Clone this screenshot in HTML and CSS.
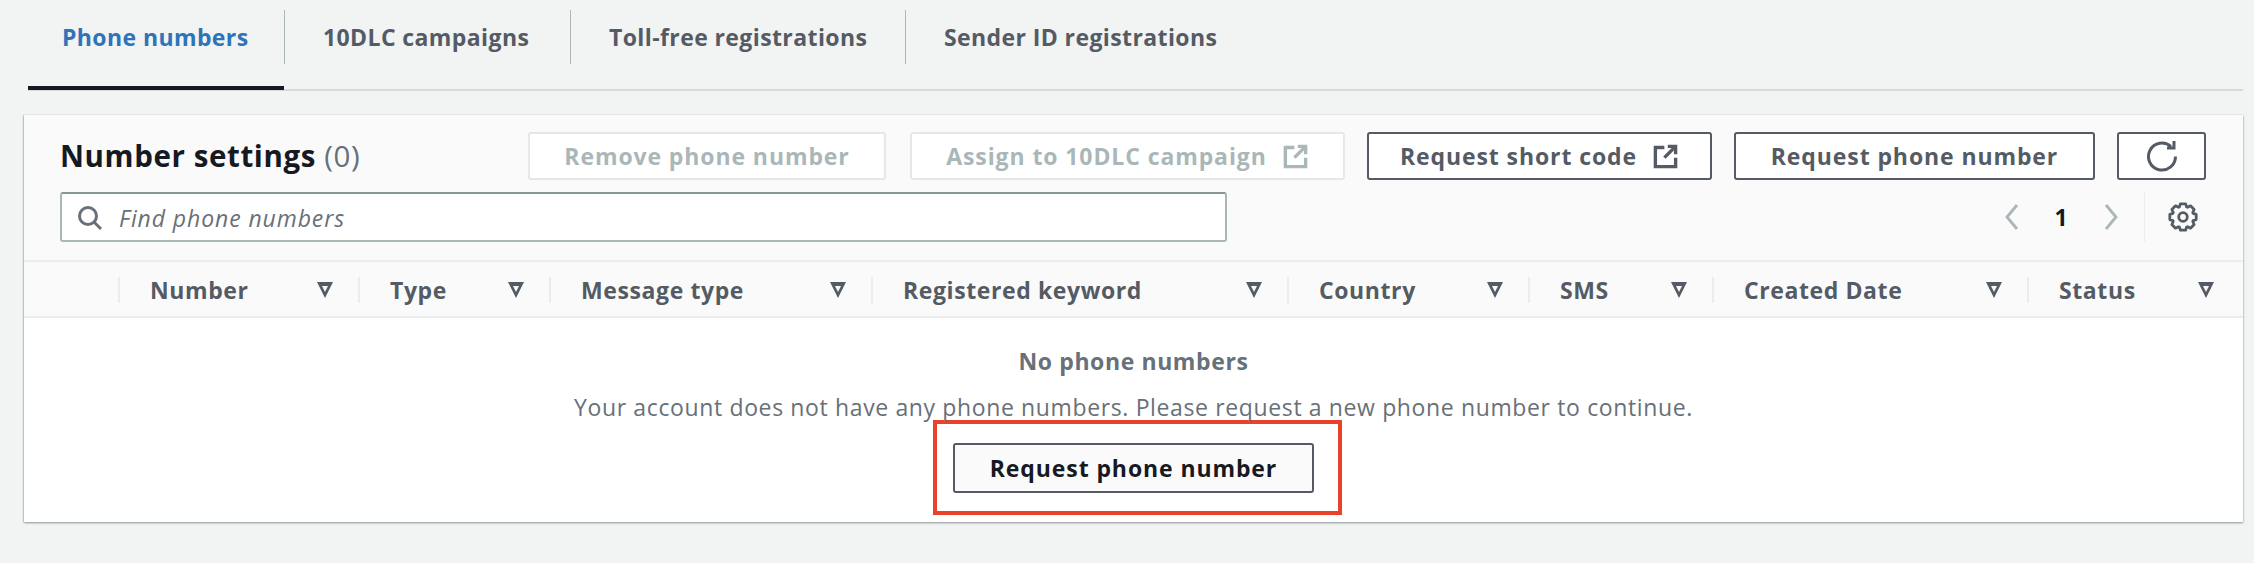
FILE: index.html
```html
<!DOCTYPE html>
<html lang="en">
<head>
<meta charset="utf-8">
<title>Phone numbers</title>
<link rel="stylesheet" href="styles.css">
</head>
<body>
<nav class="tabs">
  <a class="tab tab-active">Phone numbers</a>
  <a class="tab tab-two">10DLC campaigns</a>
  <a class="tab tab-three">Toll-free registrations</a>
  <a class="tab tab-four">Sender ID registrations</a>
</nav>
<section class="panel">
  <header class="panel-head">
    <div class="head-top">
      <h2 class="title">Number settings <span class="count">(0)</span></h2>
      <div class="actions">
        <button class="btn btn-disabled btn-remove">Remove phone number</button>
        <button class="btn btn-disabled btn-assign">Assign to 10DLC campaign
          <svg class="ext" viewBox="0 0 24 24"><path d="M11 4H3v17h18v-8M14 3h7v7M21 3 11 13"/></svg>
        </button>
        <button class="btn btn-short">Request short code
          <svg class="ext" viewBox="0 0 24 24"><path d="M11 4H3v17h18v-8M14 3h7v7M21 3 11 13"/></svg>
        </button>
        <button class="btn btn-phone">Request phone number</button>
        <button class="btn btn-refresh" aria-label="Refresh">
          <svg class="refresh" viewBox="0 0 32 32"><path d="M29.500 16.500A13.500 13.500 0 1 1 25 6.500M28 1v7h-7"/></svg>
        </button>
      </div>
    </div>
    <div class="head-bottom">
      <label class="search">
        <svg class="search-icon" viewBox="0 0 26 26"><circle cx="11" cy="11" r="8.500"/><path d="m17 17 7 7"/></svg>
        <span class="placeholder">Find phone numbers</span>
      </label>
      <div class="pager">
        <svg class="chev" viewBox="0 0 16 28"><path d="M13 2 3 14l10 12"/></svg>
        <span class="page">1</span>
        <svg class="chev" viewBox="0 0 16 28"><path d="m3 2 10 12L3 26"/></svg>
        <span class="pager-sep"></span>
        <svg class="gear" viewBox="0 0 28 28"><circle cx="14" cy="14" r="4"/><polygon points="26.300,16.400 23.400,17.400 23.100,18.200 24.400,21 21,24.400 18.200,23.100 17.400,23.400 16.400,26.300 11.600,26.300 10.600,23.400 9.800,23.100 7,24.400 3.600,21 4.900,18.200 4.600,17.400 1.700,16.400 1.700,11.600 4.600,10.600 4.900,9.800 3.600,7 7,3.600 9.800,4.900 10.600,4.600 11.600,1.700 16.400,1.700 17.400,4.600 18.200,4.900 21,3.600 24.400,7 23.100,9.800 23.400,10.600 26.300,11.600"/></svg>
      </div>
    </div>
  </header>
  <div class="thead">
    <div class="th th-select"></div>
    <div class="th"><span>Number</span><i class="sort"></i></div>
    <div class="th"><span>Type</span><i class="sort"></i></div>
    <div class="th"><span>Message type</span><i class="sort"></i></div>
    <div class="th"><span>Registered keyword</span><i class="sort"></i></div>
    <div class="th"><span>Country</span><i class="sort"></i></div>
    <div class="th"><span>SMS</span><i class="sort"></i></div>
    <div class="th"><span>Created Date</span><i class="sort"></i></div>
    <div class="th"><span>Status</span><i class="sort"></i></div>
  </div>
  <div class="empty">
    <p class="empty-title">No phone numbers</p>
    <p class="empty-text">Your account does not have any phone numbers. Please request a new phone number to continue.</p>
    <div class="highlight">
      <button class="btn btn-empty">Request phone number</button>
    </div>
  </div>
</section>
</body>
</html>
```
FILE: styles.css
```css
* { box-sizing: border-box; }
html, body { margin: 0; }
html { background: #fff; }
body {
  background: #f2f3f3;
  font-family: "Open Sans", "Noto Sans", sans-serif;
  letter-spacing: 0.6px;
  color: #545b64;
  overflow: hidden;
  height: 563px;
  padding: 0 11px 0 24px;
}
.tabs {
  display: flex;
  height: 91px;
  margin: 0 0 24px 4px;
  padding-top: 10px;
  border-bottom: 2px solid #d5dbdb;
  align-items: flex-start;
}
.tab {
  height: 54px;
  display: flex;
  align-items: center;
  font-size: 23px;
  font-weight: 700;
  letter-spacing: 0.4px;
  white-space: nowrap;
  padding-left: 34px;
  border-right: 1px solid #aab7b8;
}
.tab-active { width: 257px; color: #2f73b8; position: relative; }
.tab-active::after {
  content: "";
  position: absolute;
  left: 0;
  right: 0;
  top: 76px;
  height: 4px;
  background: #16191f;
}
.tab-two { width: 286px; padding-left: 38px; }
.tab-three { width: 335px; padding-left: 38px; }
.tab-four { border-right: 0; padding-left: 38px; }
.panel {
  background: #fff;
  height: 407px;
  box-shadow: 0 1px 2px #8d969f, 1px 0 1px #e4e7e7, -1px 0 1px #d5dbdb;
  overflow: hidden;
}
.panel-head {
  background: #fafafa;
  height: 147px;
  padding: 17px 37px 0 36px;
  border-bottom: 2px solid #eaeded;
}
.head-top { display: flex; align-items: center; height: 48px; }
.title {
  margin: 0;
  font-size: 29.500px;
  font-weight: 700;
  color: #16191f;
  white-space: nowrap;
  line-height: 48px;
}
.count { font-weight: 400; color: #687078; }
.actions { display: flex; margin-left: auto; gap: 22px; }
.btn {
  height: 48px;
  padding: 0;
  font: 700 23px "Open Sans", "Noto Sans", sans-serif;
  letter-spacing: 0.9px;
  color: #545b64;
  background: #fff;
  border: 2px solid #545b64;
  border-radius: 3px;
  display: flex;
  align-items: center;
  justify-content: center;
  white-space: nowrap;
}
.btn-disabled {
  color: #aab7b8;
  border-color: #e4e8e8;
}
.btn-remove { width: 358px; margin-right: 2px; }
.btn-assign { width: 435px; }
.btn-short { width: 345px; }
.btn-phone { width: 361px; }
.btn-refresh { width: 89px; }
.ext {
  width: 27px;
  height: 27px;
  margin-left: 15px;
  fill: none;
  stroke: currentColor;
  stroke-width: 3;
}
.refresh {
  width: 32px;
  height: 32px;
  fill: none;
  stroke: #545b64;
  stroke-width: 3;
}
.head-bottom {
  display: flex;
  align-items: flex-start;
  justify-content: space-between;
  margin-top: 12px;
}
.search {
  width: 1167px;
  height: 50px;
  background: #fff;
  border: 2px solid #aab7b8;
  border-top-color: #879596;
  border-radius: 3px;
  display: flex;
  align-items: center;
  padding: 1px 0 0 15px;
}
.search-icon {
  width: 26px;
  height: 26px;
  fill: none;
  stroke: #687078;
  stroke-width: 3;
  flex: none;
}
.placeholder {
  margin-left: 16px;
  font-size: 23px;
  font-style: italic;
  letter-spacing: 0.9px;
  color: #687078;
}
.pager { display: flex; align-items: center; height: 50px; margin-right: 8px; }
.chev {
  width: 16px;
  height: 28px;
  fill: none;
  stroke: #aab7b8;
  stroke-width: 2.800;
}
.page {
  width: 83px;
  text-align: center;
  font-size: 23px;
  font-weight: 700;
  color: #16191f;
}
.pager-sep {
  width: 1px;
  height: 50px;
  background: #eaeded;
  margin-left: 25px;
  margin-right: 23px;
}
.gear {
  width: 30px;
  height: 30px;
  fill: none;
  stroke: #545b64;
  stroke-width: 2.600;
  stroke-linejoin: round;
}
.thead {
  display: grid;
  grid-template-columns: 96px 240px 191px 322px 416px 241px 184px 315px 214px;
  height: 56px;
  padding-top: 2px;
  background: #fafafa;
  border-bottom: 2px solid #eaeded;
  align-items: center;
}
.th {
  height: 26px;
  display: flex;
  align-items: center;
  justify-content: space-between;
  padding: 0 25px 0 30px;
  font-size: 23px;
  font-weight: 700;
  border-right: 2px solid #eaeded;
  white-space: nowrap;
}
.th:last-child { border-right: 0; padding-right: 29px; }
.sort {
  width: 16px;
  height: 16px;
  clip-path: polygon(0 0, 100% 0, 50% 100%);
  background: #545b64;
  position: relative;
  flex: none;
}
.sort::after {
  content: "";
  position: absolute;
  left: 5px;
  top: 4px;
  width: 6px;
  height: 6px;
  clip-path: polygon(0 0, 100% 0, 50% 100%);
  background: #fafafa;
}
.empty { text-align: center; padding-top: 26px; }
.empty-title {
  margin: 0;
  font-size: 23px;
  font-weight: 700;
  color: #687078;
  line-height: 34px;
}
.empty-text {
  margin: 12px 0 0;
  font-size: 23px;
  letter-spacing: 0.63px;
  color: #687078;
  line-height: 34px;
}
.highlight {
  width: 409px;
  height: 95px;
  margin: -4px 0 0 909px;
  border: 4px solid #e8432a;
  padding-right: 8px;
  display: flex;
  align-items: center;
  justify-content: center;
}
.btn-empty { width: 361px; height: 50px; color: #16191f; background: #fafafa; }
```
